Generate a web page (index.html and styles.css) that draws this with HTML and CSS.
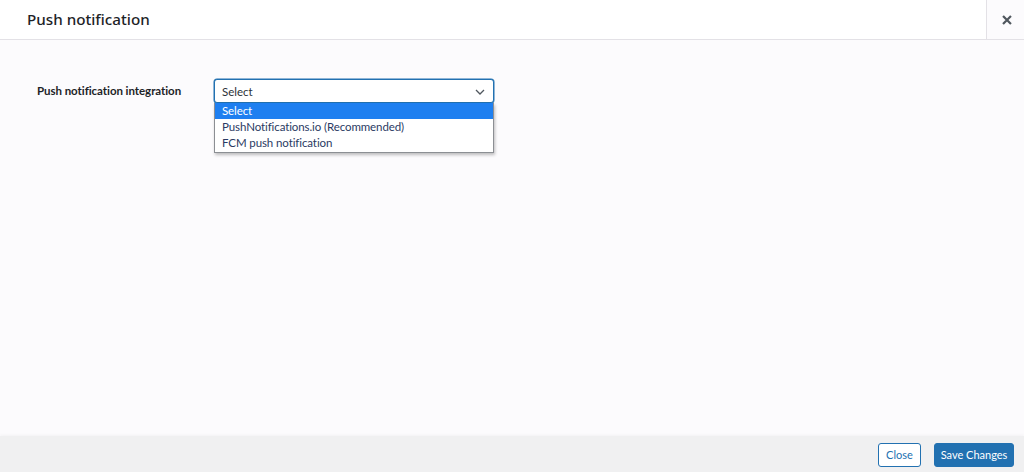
FILE: index.html
```html
<!DOCTYPE html>
<html>
<head>
<meta charset="utf-8">
<link rel="stylesheet" href="styles.css">
</head>
<body>
<div class="modal">
  <header class="modal-header">
    <h1 class="modal-title">Push notification</h1>
    <button class="modal-close" aria-label="Close">
      <svg width="10" height="10" viewBox="0 0 10 10"><path d="M1.8 1.8 L8.2 8.2 M8.2 1.8 L1.8 8.2" stroke="#50575e" stroke-width="2.2" stroke-linecap="square"/></svg>
    </button>
  </header>
  <main class="modal-body">
    <div class="field-row">
      <label class="field-label">Push notification integration</label>
      <div class="select-wrap">
        <div class="select-box">
          <span>Select</span>
          <svg class="chev" width="10" height="6" viewBox="0 0 10 6"><path d="M1 1 L5 5 L9 1" fill="none" stroke="#50575e" stroke-width="1.3"/></svg>
        </div>
        <ul class="select-list">
          <li class="opt active">Select</li>
          <li class="opt">PushNotifications.io (Recommended)</li>
          <li class="opt">FCM push notification</li>
        </ul>
      </div>
    </div>
  </main>
  <footer class="modal-footer">
    <button class="btn btn-secondary">Close</button>
    <button class="btn btn-primary">Save Changes</button>
  </footer>
</div>
</body>
</html>
```
FILE: styles.css
```css
* { box-sizing: border-box; }
html, body { margin: 0; padding: 0; }
body {
  width: 1024px;
  height: 472px;
  overflow: hidden;
  font-family: "Lato", "Noto Sans", sans-serif;
  color: #1d2327;
}
.modal {
  display: flex;
  flex-direction: column;
  height: 472px;
  background: #fcfbfd;
}
.modal-header {
  height: 40px;
  flex: 0 0 40px;
  display: flex;
  align-items: stretch;
  background: #fff;
  border-bottom: 1px solid #e3e1e6;
}
.modal-title {
  flex: 1;
  margin: 0;
  padding: 0 0 0 27px;
  font-family: "Noto Sans", sans-serif;
  font-size: 15.2px;
  font-weight: 500;
  line-height: 39px;
  color: #1d2327;
}
.modal-close {
  width: 38px;
  border: 0;
  border-left: 1px solid #e3e1e6;
  background: #fcfbfd;
  display: flex;
  align-items: center;
  justify-content: center;
  padding: 0 0 0 2px;
}
.modal-body {
  flex: 1;
  padding: 39px 0 0 37px;
}
.field-row {
  display: flex;
  align-items: flex-start;
}
.field-label {
  width: 177px;
  font-size: 11.5px;
  font-weight: 700;
  letter-spacing: -0.05px;
  line-height: 24px;
  color: #1d2327;
}
.select-wrap {
  position: relative;
  width: 280px;
}
.select-box {
  height: 24px;
  border: 1px solid #2271b1;
  border-radius: 3px;
  background: #fff;
  display: flex;
  align-items: center;
  justify-content: space-between;
  padding: 0 8px 0 7px;
  font-size: 11.5px;
  color: #2c3338;
  box-shadow: 0 0 0 0.5px #2271b1;
}
.chev { margin-top: 1px; }
.select-list {
  position: absolute;
  left: 0;
  top: 24px;
  width: 280px;
  margin: 0;
  padding: 0 0 1px;
  list-style: none;
  background: #fff;
  border: 1px solid #8c8f94;
  border-top: 0;
  box-shadow: 1px 2px 3px rgba(0,0,0,0.25);
}
.opt {
  height: 16px;
  line-height: 16px;
  padding: 0 7px;
  font-size: 11.5px;
  letter-spacing: -0.1px;
  color: #2a3a63;
}
.opt.active {
  background: #1e7ff0;
  color: #fff;
}
.modal-footer {
  flex: 0 0 36px;
  height: 36px;
  background: #f0f0f1;
  box-shadow: 0 -1px 3px rgba(0,0,0,0.04);
  display: flex;
  align-items: center;
  justify-content: flex-end;
  padding: 1px 10px 0 0;
  gap: 13px;
}
.btn {
  height: 24px;
  font-family: inherit;
  font-size: 11px;
  border-radius: 3px;
  padding: 0;
  white-space: nowrap;
  cursor: pointer;
}
.btn-secondary {
  background: #fff;
  color: #2271b1;
  border: 1px solid #2271b1;
  width: 43px;
}
.btn-primary {
  background: #2271b1;
  color: #fff;
  border: 1px solid #2271b1;
  width: 80px;
}
```
